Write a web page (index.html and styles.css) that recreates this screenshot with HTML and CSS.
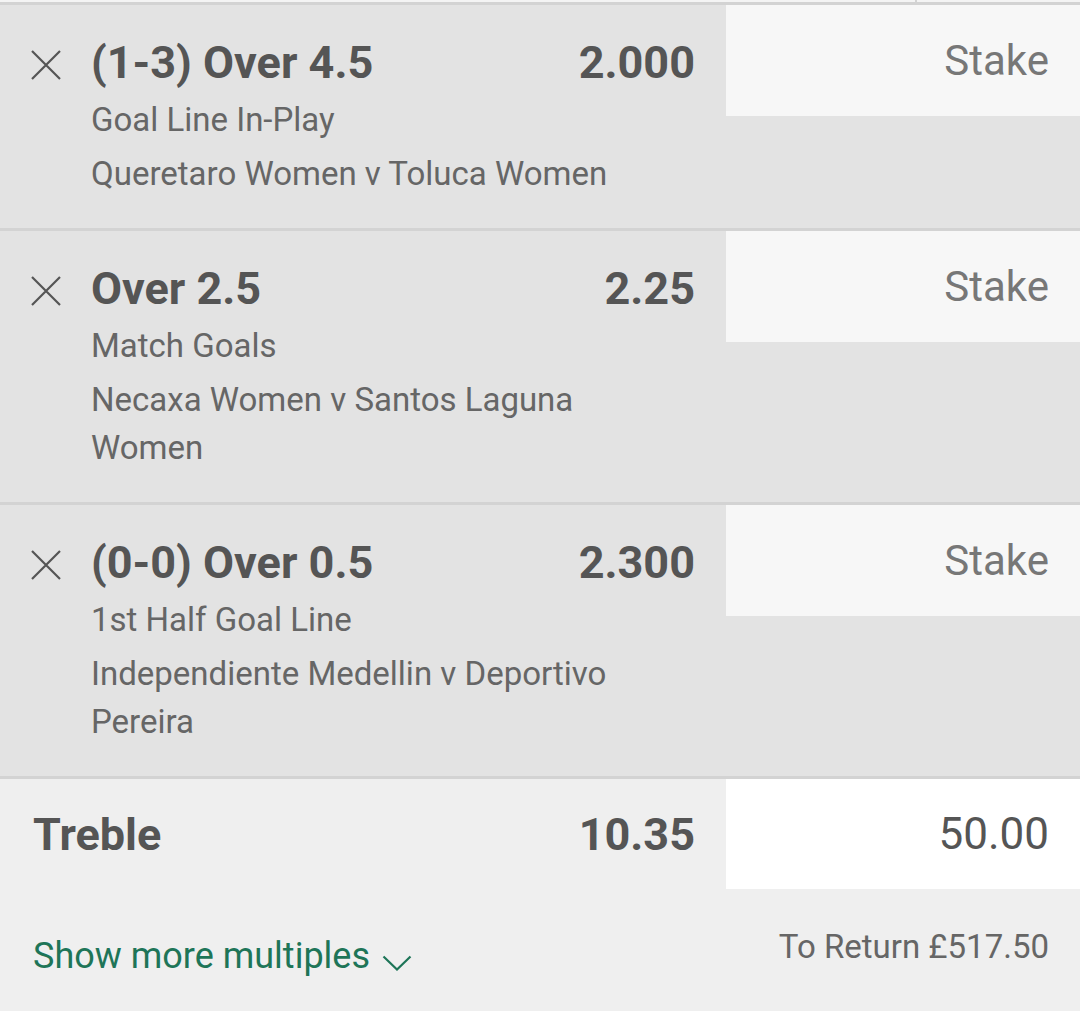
FILE: index.html
```html
<!DOCTYPE html>
<html lang="en">
<head>
<meta charset="utf-8">
<title>Bet slip</title>
<link rel="stylesheet" href="styles.css">
</head>
<body>
<div class="top"><div class="top-spacer"></div><div class="top-tick"></div></div>

<div class="leg">
  <div class="leg-main">
    <div class="leg-x">
      <svg width="30" height="30" viewBox="0 0 30 30"><path d="M1 1 L29 29 M29 1 L1 29" stroke="#555" stroke-width="2.2" fill="none"/></svg>
    </div>
    <div class="leg-info">
      <div class="leg-head"><span class="leg-title">(1-3) Over 4.5</span><span class="leg-odds">2.000</span></div>
      <p class="leg-market">Goal Line In-Play</p>
      <p class="leg-event">Queretaro Women v Toluca Women</p>
    </div>
  </div>
  <div class="stake">Stake</div>
</div>

<div class="leg">
  <div class="leg-main">
    <div class="leg-x">
      <svg width="30" height="30" viewBox="0 0 30 30"><path d="M1 1 L29 29 M29 1 L1 29" stroke="#555" stroke-width="2.2" fill="none"/></svg>
    </div>
    <div class="leg-info">
      <div class="leg-head"><span class="leg-title">Over 2.5</span><span class="leg-odds">2.25</span></div>
      <p class="leg-market">Match Goals</p>
      <p class="leg-event">Necaxa Women v Santos Laguna Women</p>
    </div>
  </div>
  <div class="stake">Stake</div>
</div>

<div class="leg">
  <div class="leg-main">
    <div class="leg-x">
      <svg width="30" height="30" viewBox="0 0 30 30"><path d="M1 1 L29 29 M29 1 L1 29" stroke="#555" stroke-width="2.2" fill="none"/></svg>
    </div>
    <div class="leg-info">
      <div class="leg-head"><span class="leg-title">(0-0) Over 0.5</span><span class="leg-odds">2.300</span></div>
      <p class="leg-market">1st Half Goal Line</p>
      <p class="leg-event">Independiente Medellin v Deportivo Pereira</p>
    </div>
  </div>
  <div class="stake">Stake</div>
</div>

<div class="multi">
  <div class="multi-row">
    <div class="multi-main"><span class="multi-name">Treble</span><span class="leg-odds">10.35</span></div>
    <div class="stake stake-filled">50.00</div>
  </div>
  <div class="multi-foot">
    <div class="more">Show more multiples <svg class="chev" width="30" height="16" viewBox="0 0 30 16"><path d="M1.5 1.5 L15 14.5 L28.5 1.5" stroke="#1e7558" stroke-width="2.2" fill="none"/></svg></div>
    <div class="return">To Return £517.50</div>
  </div>
</div>
</body>
</html>
```

FILE: styles.css
```css
html, body {
  margin: 0;
  padding: 0;
  background: #efefef;
  font-family: Roboto, "Noto Sans", sans-serif;
}
p { margin: 0; }

.top {
  display: flex;
  height: 2px;
  background: #f4f4f4;
}
.top-spacer { width: 915px; }
.top-tick { width: 2px; background: #d3d3d3; }

.leg {
  display: flex;
  background: #e3e3e3;
  border-top: 3px solid #d3d3d3;
}
.leg-main {
  width: 726px;
  box-sizing: border-box;
  display: flex;
  padding: 0 31px 30px 31px;
}
.leg-x {
  width: 60px;
  flex: none;
  padding-top: 45px;
}
.leg-x svg { display: block; }
.leg-info {
  flex: 1;
  padding-top: 33px;
}
.leg-head {
  display: flex;
  justify-content: space-between;
  align-items: center;
  height: 48px;
}
.leg-title, .leg-odds, .multi-name {
  font-size: 45px;
  font-weight: 700;
  color: #555;
}
.leg-market, .leg-event {
  font-size: 33px;
  line-height: 48px;
  color: #666;
  max-width: 580px;
}
.leg-market { margin-top: 10px; }
.leg-event { margin-top: 6px; }

.stake {
  width: 354px;
  height: 111px;
  flex: none;
  box-sizing: border-box;
  background: #f7f7f7;
  display: flex;
  align-items: center;
  justify-content: flex-end;
  padding-right: 31px;
  font-size: 42px;
  color: #777;
}

.multi {
  border-top: 3px solid #d3d3d3;
  background: #efefef;
}
.multi-row { display: flex; }
.multi-main {
  width: 726px;
  box-sizing: border-box;
  display: flex;
  justify-content: space-between;
  align-items: center;
  padding: 0 31px 0 33px;
  height: 110px;
}
.stake-filled {
  height: 110px;
  background: #fff;
  font-size: 44px;
  color: #555;
}
.multi-foot {
  display: flex;
  justify-content: space-between;
  align-items: flex-start;
  padding: 0 31px 0 33px;
  height: 122px;
}
.more {
  margin-top: 47px;
  font-size: 36px;
  line-height: 40px;
  color: #1e7558;
  display: flex;
  align-items: center;
}
.chev { margin-left: 12px; margin-top: 14px; }
.return {
  margin-top: 38px;
  font-size: 33px;
  line-height: 40px;
  color: #666;
}
```
